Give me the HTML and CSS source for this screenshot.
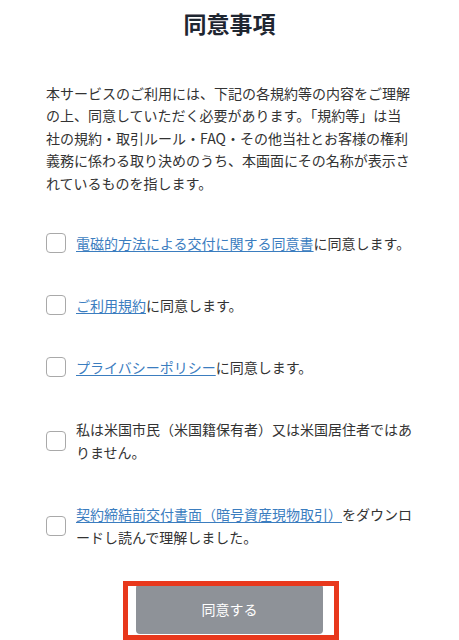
FILE: index.html
```html
<!DOCTYPE html>
<html lang="ja">
<head>
<meta charset="utf-8">
<title>同意事項</title>
<link rel="stylesheet" href="styles.css">
</head>
<body>
<main class="page">
  <h1 class="title">同意事項</h1>
  <p class="intro">本サービスのご利用には、下記の各規約等の内容をご理解の上、同意していただく必要があります。「規約等」は当社の規約・取引ルール・FAQ・その他当社とお客様の権利義務に係わる取り決めのうち、本画面にその名称が表示されているものを指します。</p>
  <ul class="agree-list">
    <li class="agree-item"><span class="checkbox"></span><span class="agree-text"><a class="doc-link" href="#">電磁的方法による交付に関する同意書</a>に同意します。</span></li>
    <li class="agree-item"><span class="checkbox"></span><span class="agree-text"><a class="doc-link" href="#">ご利用規約</a>に同意します。</span></li>
    <li class="agree-item"><span class="checkbox"></span><span class="agree-text"><a class="doc-link" href="#">プライバシーポリシー</a>に同意します。</span></li>
    <li class="agree-item"><span class="checkbox"></span><span class="agree-text">私は米国市民（米国籍保有者）又は米国居住者ではありません。</span></li>
    <li class="agree-item"><span class="checkbox"></span><span class="agree-text"><a class="doc-link" href="#">契約締結前交付書面（暗号資産現物取引）</a>をダウンロードし読んで理解しました。</span></li>
  </ul>
  <div class="actions">
    <div class="btn-wrap">
      <button class="btn" type="button">同意する</button>
      <span class="highlight"></span>
    </div>
  </div>
</main>
</body>
</html>
```

FILE: styles.css
```css
html, body {
  margin: 0;
  padding: 0;
  background: #ffffff;
}

body {
  font-family: "Noto Sans CJK JP", "Noto Sans", sans-serif;
  color: #333333;
  overflow: hidden;
}

.page {
  padding: 0 46px;
  height: 640px;
  box-sizing: border-box;
}

.title {
  margin: 6px 0 0;
  font-size: 23px;
  line-height: 34px;
  font-weight: 700;
  text-align: center;
  color: #1f2631;
}

.intro {
  margin: 42px 0 0;
  font-size: 14px;
  line-height: 22.4px;
  color: #333333;
}

.agree-list {
  list-style: none;
  margin: 18px 0 0;
  padding: 0;
}

.agree-item {
  display: flex;
  align-items: center;
  gap: 10px;
  padding: 19.5px 0;
}

.checkbox {
  flex: 0 0 auto;
  width: 18px;
  height: 18px;
  border: 1px solid #a9a9a9;
  border-radius: 4px;
  background: #ffffff;
}

.agree-text {
  flex: 1 1 auto;
  font-size: 14px;
  line-height: 23px;
  color: #333333;
}

.doc-link {
  color: #3b7dbf;
  text-decoration: underline;
  text-underline-offset: 2px;
}

.actions {
  display: flex;
  justify-content: center;
  margin-top: 16px;
}

.btn-wrap {
  position: relative;
}

.btn {
  display: block;
  width: 187px;
  height: 50px;
  border: none;
  border-radius: 4px;
  background: #8e9298;
  color: #ffffff;
  font-family: "Noto Sans CJK JP", "Noto Sans", sans-serif;
  font-size: 14px;
  padding: 0;
}

.highlight {
  position: absolute;
  left: -13px;
  right: -16px;
  top: -3px;
  bottom: -6px;
  border: 5px solid #e8381c;
  pointer-events: none;
}
```
